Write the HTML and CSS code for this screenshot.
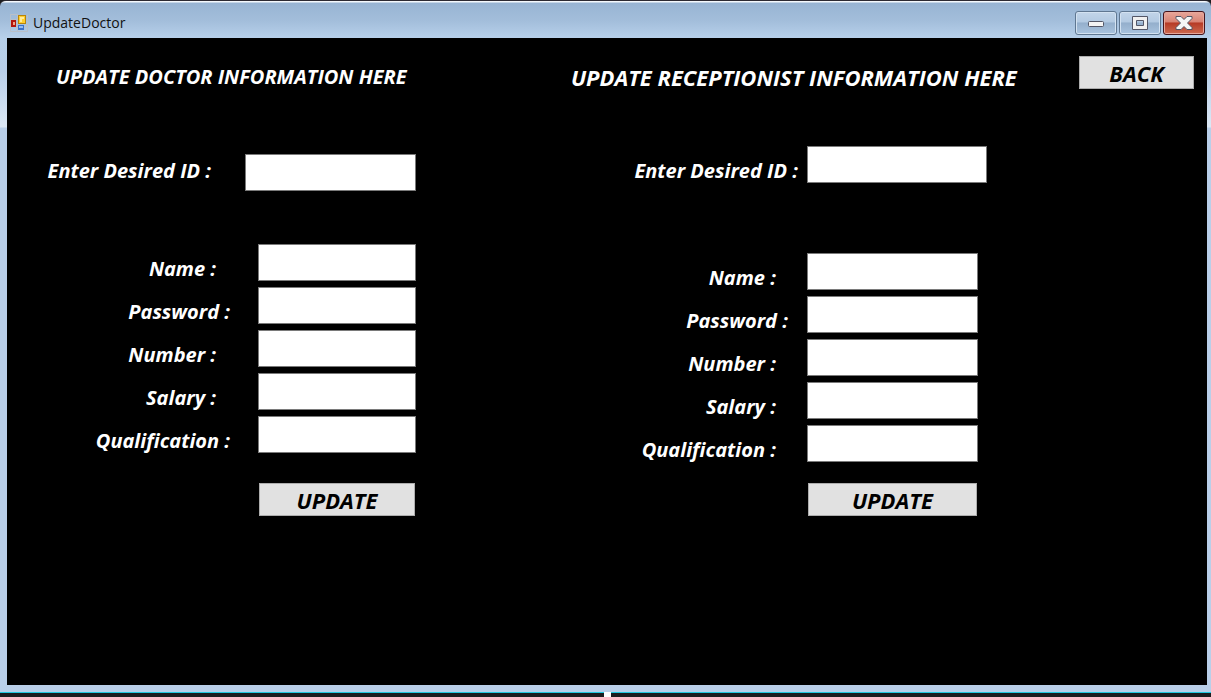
FILE: index.html
```html
<!DOCTYPE html>
<html lang="en">
<head>
<meta charset="utf-8">
<title>UpdateDoctor</title>
<link rel="stylesheet" href="styles.css">
</head>
<body>
<div class="window">
  <header class="titlebar">
    <svg class="app-icon" width="18" height="18" viewBox="0 0 18 18" aria-hidden="true">
      <path d="M0.500 0.500H7.500V17.500H0.500ZM0 5.500H8M0 12.500H18V17.500H1M17.500 1V17" fill="none" stroke="#b9c0c9"/>
      <rect x="1" y="6" width="5" height="7" fill="#b3160d"/><rect x="3" y="8" width="2" height="3" fill="#f1a184"/>
      <rect x="8" y="1" width="8" height="9" fill="#b98508"/><rect x="9" y="2" width="6" height="7" fill="#ffce2e"/><path d="M10 3h4v2h-2v3h-2z" fill="#ffec9b"/>
      <rect x="8" y="11" width="6" height="5" fill="#3c72c8"/><path d="M9 12h4v2H9z" fill="#91bdf5"/>
    </svg>
    <h1 class="title">UpdateDoctor</h1>
    <div class="controls">
      <button class="control" type="button" aria-label="Minimize">
        <svg width="18" height="16" viewBox="0 0 18 16"><rect x="1.500" y="6.500" width="15" height="5" rx="1" fill="#f4f4f4" stroke="#535666"/></svg>
      </button>
      <button class="control" type="button" aria-label="Maximize">
        <svg width="18" height="16" viewBox="0 0 18 16"><path d="M1.500 1.500h15v13h-15zM5.500 5.500v5h7v-5z" fill="#f0f0f0" fill-rule="evenodd" stroke="#535666" stroke-linejoin="round"/></svg>
      </button>
      <button class="control control-close" type="button" aria-label="Close">
        <svg width="18" height="16" viewBox="0 0 18 16"><path d="M1 1.500h5l3 3 3-3h5v2l-4.500 4.500 4.500 4.500v2h-5l-3-3-3 3H1v-2L5.500 8 1 3.500z" fill="#f5f5f5" stroke="#535666" stroke-linejoin="round"/></svg>
      </button>
    </div>
  </header>

  <main class="client">
    <form class="panel doctor">
      <h2 class="heading">UPDATE DOCTOR INFORMATION HERE</h2>
      <div class="row id-row"><label for="d-id">Enter Desired ID :</label><input id="d-id" type="text"></div>
      <div class="fields">
        <div class="row"><label for="d-name">Name :</label><input id="d-name" type="text"></div>
        <div class="row"><label class="near" for="d-pass">Password :</label><input id="d-pass" type="text"></div>
        <div class="row"><label for="d-num">Number :</label><input id="d-num" type="text"></div>
        <div class="row"><label for="d-sal">Salary :</label><input id="d-sal" type="text"></div>
        <div class="row"><label class="near" for="d-qual">Qualification :</label><input id="d-qual" type="text"></div>
      </div>
      <button class="action submit" type="button">UPDATE</button>
    </form>

    <form class="panel receptionist">
      <h2 class="heading">UPDATE RECEPTIONIST INFORMATION HERE</h2>
      <div class="row id-row"><label for="r-id">Enter Desired ID :</label><input id="r-id" type="text"></div>
      <div class="fields">
        <div class="row"><label for="r-name">Name :</label><input id="r-name" type="text"></div>
        <div class="row"><label class="near" for="r-pass">Password :</label><input id="r-pass" type="text"></div>
        <div class="row"><label for="r-num">Number :</label><input id="r-num" type="text"></div>
        <div class="row"><label for="r-sal">Salary :</label><input id="r-sal" type="text"></div>
        <div class="row"><label for="r-qual">Qualification :</label><input id="r-qual" type="text"></div>
      </div>
      <button class="action submit" type="button">UPDATE</button>
    </form>

    <button class="action back" type="button">BACK</button>
  </main>
</div>
<footer class="strip"><span class="handle"></span></footer>
</body>
</html>
```
FILE: styles.css
```css
* { box-sizing: border-box; }

body {
  margin: 0;
  min-height: 100vh;
  display: flex;
  flex-direction: column;
  background: #1c1c1e;
  font-family: "Open Sans", "Noto Sans", sans-serif;
}

.window {
  flex: 1;
  display: flex;
  flex-direction: column;
  padding: 0 4px 7px 7px;
  border-top: 1px solid #2d2a32;
  border-radius: 6px 6px 0 0;
  background: linear-gradient(#f4f8fc 0, #f4f8fc 1px, #98b4d3 2px, #a3bedb 20px, #b7d0ea 37px, #b9cfe9 70px, #dce8f5 126px, #b9cfe9 127px);
}

.titlebar {
  display: flex;
  align-items: center;
  height: 37px;
  padding: 7px 2px 0 3px;
}

.title {
  flex: 1;
  margin: 0 0 0 5px;
  font: 400 14px/20px "Open Sans", "Noto Sans", sans-serif;
  color: #111;
}

.controls { display: flex; gap: 2px; }

.control {
  display: grid;
  place-items: center;
  width: 42px;
  height: 24px;
  padding: 0;
  border: 1px solid #5f7791;
  border-radius: 3px;
  background: linear-gradient(#c2d5e9 0, #b3cae2 45%, #94afcc 50%, #a9c3de 100%);
  box-shadow: inset 0 0 0 1px #d3e2f1;
}

.control-close {
  border-color: #45141c;
  background: linear-gradient(#e8a79b 0, #d88374 45%, #b63a26 50%, #cc6a50 100%);
  box-shadow: inset 0 0 0 1px #e6a69a;
}

.client {
  flex: 1;
  display: grid;
  grid-template-columns: 47% 1fr auto;
  align-items: start;
  padding-right: 13px;
  background: #000;
  color: #fff;
}

.panel { padding-top: 27px; }

.heading {
  margin: 0;
  font-style: italic;
  font-weight: 700;
  line-height: 24px;
  white-space: nowrap;
}

.row { display: flex; align-items: center; }

.row label {
  flex: none;
  text-align: right;
  white-space: nowrap;
  font-size: 20px;
  font-style: italic;
  font-weight: 700;
  line-height: 22px;
}

.row input {
  height: 37px;
  padding: 4px 8px;
  border: 1px solid #7a7a7a;
  border-radius: 0;
  background: #fff;
  font-size: 18px;
}

.fields { display: flex; flex-direction: column; gap: 6px; }
.fields label { padding-top: 12px; }

.action {
  height: 33px;
  padding: 0;
  border: 1px solid #adadad;
  background: #e1e1e1;
  color: #000;
  font: italic 700 22px/24px "Open Sans", "Noto Sans", sans-serif;
}

.submit { display: block; }

.doctor .heading { padding-left: 49px; font-size: 20px; }
.doctor .id-row { margin: 65px 0 53px; }
.doctor .id-row label { width: 238px; padding: 0 34px 4px 0; }
.doctor .id-row input { width: 171px; }
.doctor .fields label { width: 251px; padding-right: 42px; }
.doctor .fields .near { padding-right: 28px; }
.doctor .fields input { width: 158px; }
.doctor .submit { width: 156px; margin: 30px 0 0 252px; }

.receptionist .heading { padding-left: 6px; font-size: 22px; }
.receptionist .id-row { margin: 57px 0 70px; }
.receptionist .id-row label { width: 242px; padding: 12px 9px 0 0; }
.receptionist .id-row input { width: 180px; }
.receptionist .fields label { width: 242px; padding-right: 31px; }
.receptionist .fields .near { padding-right: 19px; }
.receptionist .fields input { width: 171px; }
.receptionist .submit { width: 169px; margin: 21px 0 0 243px; }

.back { width: 115px; margin-top: 18px; }

.strip {
  display: flex;
  justify-content: center;
  height: 5px;
  padding-left: 4px;
  border-top: 1px solid #20c8df;
  background: #1c1c1e;
}

.handle { width: 7px; margin-top: -1px; background: #fff; }
```
